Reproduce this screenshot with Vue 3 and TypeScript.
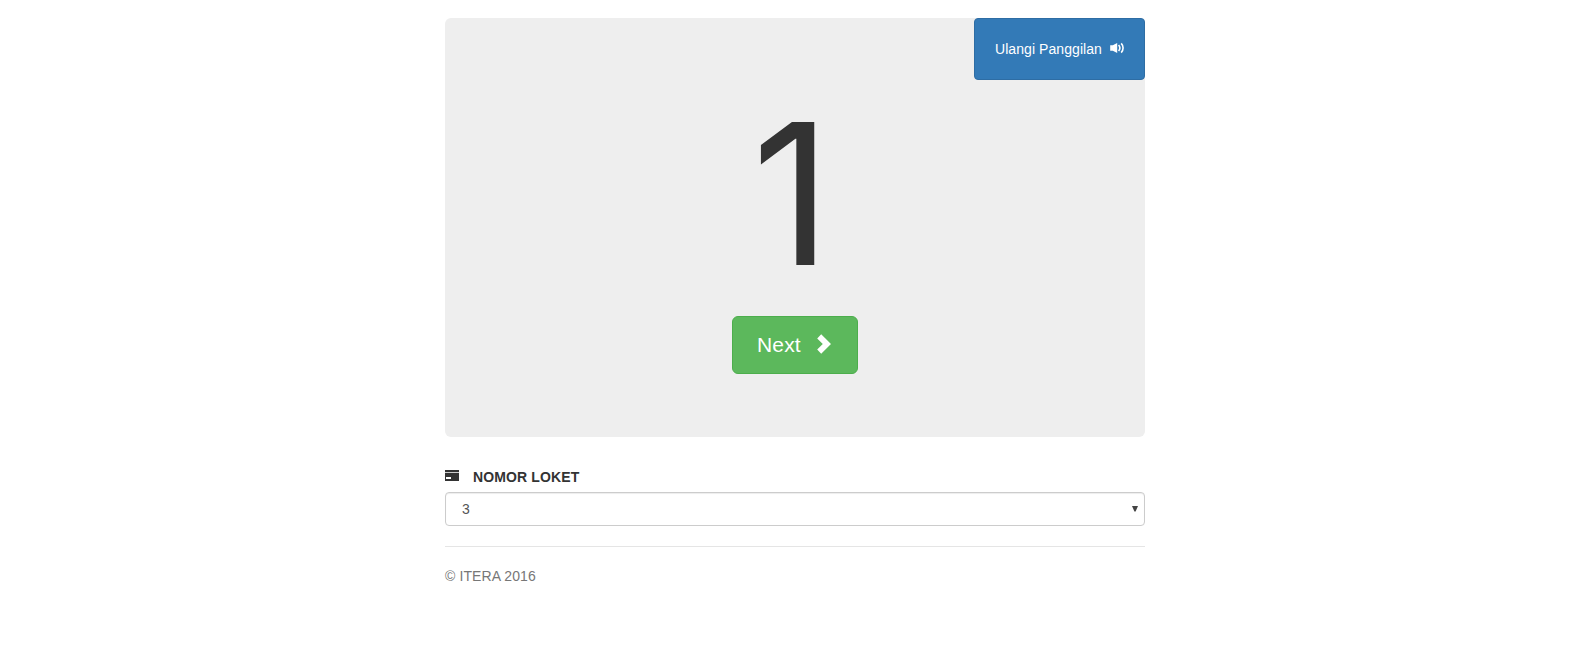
<script setup lang="ts">
import { ref } from 'vue'

const current = ref<number>(1)
const counter = ref<string>('3')
const counters: string[] = ['1', '2', '3', '4', '5']

function next(): void {
  current.value += 1
}
</script>

<template>
  <main class="container">
    <section class="jumbotron">
      <button class="btn btn-primary" type="button">
        <span>Ulangi Panggilan</span>
        <svg class="icon-volume" viewBox="0 0 14 14" aria-hidden="true">
          <path d="M0.2 4.3h2.6L7.2 2v10L2.8 9.7H0.2z" fill="#fff" />
          <path d="M8.6 4a4.6 4.6 0 0 1 0 6M11.2 2.4a6.6 6.6 0 0 1 0 9.2" fill="none" stroke="#fff" stroke-width="1.6" />
        </svg>
      </button>
      <h1 class="number">{{ current }}</h1>
      <button class="btn btn-success" type="button" @click="next">
        <span>Next</span>
        <svg class="icon-chevron" viewBox="0 0 14 20" aria-hidden="true">
          <path d="M4.2 0.3 14 10l-9.8 9.7L0.2 15.6 5.8 10 0.2 4.4z" fill="#fff" />
        </svg>
      </button>
    </section>

    <div class="form-group">
      <label class="label" for="counter">
        <svg class="icon-card" viewBox="0 0 14 11" aria-hidden="true">
          <path d="M0 0h14v2H0zM0 3h14v8H0z" fill="#333" />
          <path d="M0 2h14v1H0z" fill="#ccc" />
          <path d="M1 7h5v2H1z" fill="#fff" />
        </svg>
        <span>NOMOR LOKET</span>
      </label>
      <div class="select-wrap">
        <select id="counter" v-model="counter" class="form-control">
          <option v-for="item in counters" :key="item" :value="item">{{ item }}</option>
        </select>
        <svg class="arrow" viewBox="0 0 6 6" aria-hidden="true">
          <path d="M0 0h6L3.6 5.5H2.4z" fill="#444" />
        </svg>
      </div>
    </div>

    <footer class="footer">© ITERA 2016</footer>
  </main>
</template>

<style>
body {
  margin: 0;
  background: #fff;
}
</style>

<style scoped>
* {
  box-sizing: border-box;
}

.container {
  width: 700px;
  margin-left: 445px;
  padding-top: 18px;
  font-family: "Liberation Sans", Arial, sans-serif;
  font-size: 14px;
  line-height: 20px;
  color: #333;
}

.jumbotron {
  display: flex;
  flex-direction: column;
  align-items: center;
  height: 419px;
  background: #eee;
  border-radius: 6px;
}

.btn {
  display: flex;
  align-items: center;
  margin: 0;
  font-family: inherit;
  color: #fff;
  cursor: pointer;
}

.btn-primary {
  align-self: flex-end;
  width: 171px;
  height: 62px;
  padding: 0 20px;
  font-size: 14px;
  line-height: 20px;
  letter-spacing: 0.07px;
  background: #337ab7;
  border: 1px solid #2e6da4;
  border-radius: 4px;
}

.icon-volume {
  width: 14px;
  height: 14px;
  margin: -2px 0 0 8px;
}

.number {
  margin: 4px 0 12px;
  padding-right: 7px;
  font-family: Inter, "Liberation Sans", sans-serif;
  font-size: 196px;
  font-weight: 400;
  line-height: 220px;
}

.btn-success {
  width: 126px;
  height: 58px;
  padding: 0 24px;
  font-size: 21px;
  line-height: 30px;
  letter-spacing: 0.15px;
  background: #5cb85c;
  border: 1px solid #4cae4c;
  border-radius: 6px;
}

.icon-chevron {
  width: 14px;
  height: 20px;
  margin: -3px 0 0 16px;
}

.form-group {
  padding: 30px 0 20px;
}

.label {
  display: flex;
  align-items: center;
  margin-bottom: 5px;
  font-weight: 700;
  letter-spacing: 0.12px;
}

.icon-card {
  width: 14px;
  height: 11px;
  margin: -3px 14px 0 0;
}

.select-wrap {
  position: relative;
}

.form-control {
  display: block;
  width: 100%;
  height: 34px;
  padding: 6px 16px;
  font-family: inherit;
  font-size: 14px;
  line-height: 20px;
  color: #555;
  appearance: none;
  background: #fff;
  border: 1px solid #ccc;
  border-radius: 4px;
  box-shadow: inset 0 1px 1px rgba(0, 0, 0, 0.075);
}

.arrow {
  position: absolute;
  top: 14px;
  right: 7px;
  width: 6px;
  height: 6px;
  pointer-events: none;
}

.footer {
  padding-top: 19px;
  letter-spacing: 0.1px;
  color: #777;
  border-top: 1px solid #e5e5e5;
}
</style>
